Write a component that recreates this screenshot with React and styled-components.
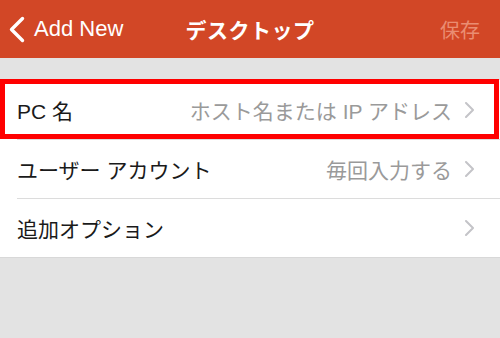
import React from "react";
import styled, { createGlobalStyle } from "styled-components";

const Global = createGlobalStyle`
  html, body { margin: 0; padding: 0; }
  body {
    width: 500px;
    height: 338px;
    overflow: hidden;
    background: #e3e3e3;
    font-family: "Liberation Sans", "Noto Sans CJK JP", sans-serif;
  }
`;

const Page = styled.div`
  width: 500px;
  height: 338px;
  display: flex;
  flex-direction: column;
  background: #e3e3e3;
  position: relative;
`;

const NavBar = styled.div`
  height: 58px;
  background: #d24726;
  display: grid;
  grid-template-columns: 1fr auto 1fr;
  align-items: center;
  color: #fff;
`;

const Back = styled.div`
  display: flex;
  align-items: center;
  gap: 9px;
  padding-left: 9px;
  font-size: 22px;
`;

const Title = styled.div`
  font-size: 21px;
  font-weight: bold;
  font-family: "Noto Sans CJK JP", sans-serif;
  letter-spacing: 0.5px;
`;

const Save = styled.div`
  justify-self: end;
  padding-right: 20px;
  font-size: 20px;
  color: #ea8d72;
  font-family: "Noto Sans CJK JP", sans-serif;
`;

const Spacer = styled.div`
  height: 21px;
  background: #e3e3e3;
  border-bottom: 1px solid #d8d8d8;
`;

const List = styled.div`
  background: #fff;
  display: flex;
  flex-direction: column;
  border-bottom: 1px solid #d8d8d8;
`;

const Row = styled.div`
  height: 59px;
  display: flex;
  align-items: center;
  margin-left: 17px;
  padding-right: 26px;
  border-top: ${(p) => (p.$first ? "none" : "1px solid #dcdcdc")};
  box-sizing: border-box;
`;

const Label = styled.div`
  flex: 1;
  font-size: 21px;
  color: #1a1a1a;
  font-family: "Liberation Sans", "Noto Sans CJK JP", sans-serif;
`;

const Value = styled.div`
  font-size: 21px;
  color: #9a9a9a;
  margin-right: 13px;
  font-family: "Liberation Sans", "Noto Sans CJK JP", sans-serif;
`;

const Highlight = styled.div`
  position: absolute;
  left: 0;
  top: 79px;
  width: 499px;
  height: 60px;
  border: 5px solid #ff0000;
  box-sizing: border-box;
  pointer-events: none;
`;

const Chevron = () => (
  <svg width="9" height="16" viewBox="0 0 9 16">
    <path d="M1 1 L8 8 L1 15" fill="none" stroke="#c4c4c8" strokeWidth="2" strokeLinecap="round" strokeLinejoin="round" />
  </svg>
);

const BackArrow = () => (
  <svg width="16" height="27" viewBox="0 0 16 27">
    <path d="M13.5 2.5 L2.5 13.5 L13.5 24.5" fill="none" stroke="#fff" strokeWidth="3.4" strokeLinecap="round" strokeLinejoin="round" />
  </svg>
);

export default function App() {
  const rows = [
    { label: "PC 名", value: "ホスト名または IP アドレス" },
    { label: "ユーザー アカウント", value: "毎回入力する" },
    { label: "追加オプション", value: "" },
  ];
  return (
    <>
      <Global />
      <Page>
        <NavBar>
          <Back>
            <BackArrow />
            <span>Add New</span>
          </Back>
          <Title>デスクトップ</Title>
          <Save>保存</Save>
        </NavBar>
        <Spacer />
        <List>
          {rows.map((r, i) => (
            <Row key={i} $first={i === 0}>
              <Label>{r.label}</Label>
              {r.value && <Value>{r.value}</Value>}
              <Chevron />
            </Row>
          ))}
        </List>
        <Highlight />
      </Page>
    </>
  );
}
